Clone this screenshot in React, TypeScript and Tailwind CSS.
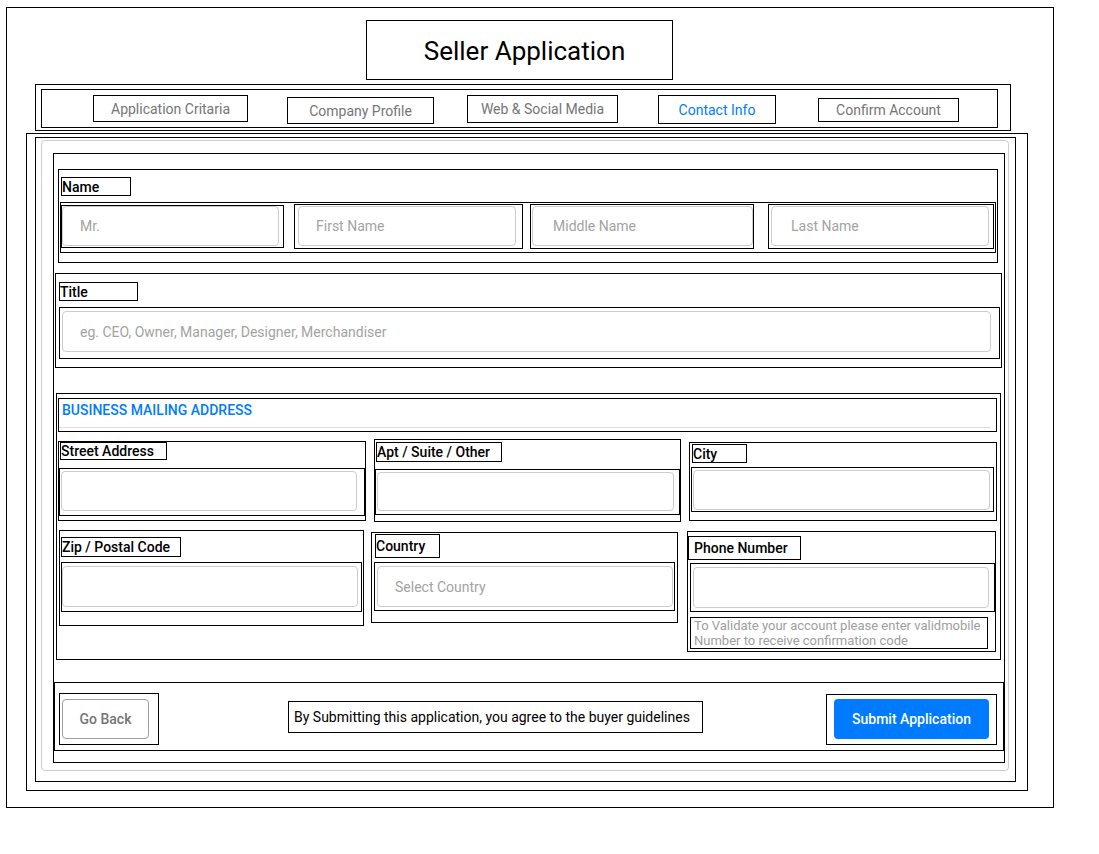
import React from "react";

const box = "border border-black";
const input =
  "block rounded-[4px] border border-[#cccccc] bg-white pl-[17px] text-sm text-black outline-none placeholder:text-[#a3a3a3]";
const label =
  "flex items-center text-sm font-medium leading-none text-black whitespace-nowrap";

const tabs = [
  { name: "Application Critaria", cls: "ml-[51px] mt-[5px] w-[155px] h-[27px]" },
  { name: "Company Profile", cls: "ml-[39px] mt-[7px] w-[147px] h-[27px]" },
  { name: "Web & Social Media", cls: "ml-[33px] mt-[5px] w-[151px] h-[28px]" },
  { name: "Contact Info", cls: "ml-[40px] mt-[5px] w-[118px] h-[29px]", active: true },
  { name: "Confirm Account", cls: "ml-[42px] mt-[8px] w-[141px] h-[24px]" },
];

const App = () => {
  return (
    <div className="pl-[6px] pt-[7px] pb-[46px] font-['Roboto',sans-serif] bg-white">
      <div className={`${box} w-[1048px] h-[801px]`}>
        {/* heading */}
        <div
          className={`${box} ml-[359px] mt-[12px] w-[307px] h-[60px] flex items-center justify-center pl-[10px] pt-[2px] text-[26px] text-black`}
        >
          Seller Application
        </div>

        {/* steps */}
        <div className={`${box} ml-[28px] mt-[4px] w-[976px] h-[47px]`}>
          <div className={`${box} ml-[5px] mt-[4px] w-[957px] h-[39px] flex items-start`}>
            {tabs.map((t) => (
              <div
                key={t.name}
                className={`${box} ${t.cls} flex items-center justify-center text-sm ${
                  t.active ? "text-[#007bff]" : "text-[#757575]"
                }`}
              >
                {t.name}
              </div>
            ))}
          </div>
        </div>

        {/* form */}
        <div className={`${box} ml-[19px] mt-[2px] w-[1002px] h-[658px]`}>
          <div className={`${box} ml-[8px] mt-[3px] w-[981px] h-[645px]`}>
            <div className="ml-[5px] mt-[2px] w-[968px] h-[631px] rounded-[4px] border border-[#cccccc]">
              <div className={`${box} ml-[11px] mt-[12px] w-[952px] h-[610px]`}>
                {/* Name */}
                <div className={`${box} ml-[4px] mt-[15px] w-[940px] h-[94px]`}>
                  <div className={`${box} ${label} ml-[2px] mt-[7px] w-[70px] h-[19px]`}>Name</div>
                  <div className={`${box} ml-[1px] mt-[6px] w-[936px] h-[51px] flex items-start`}>
                    <div className={`${box} mt-[2px] w-[223px] h-[43px]`}>
                      <input className={`${input} w-[217px] h-[40px]`} placeholder="Mr." />
                    </div>
                    <div className={`${box} ml-[10px] mt-[1px] w-[229px] h-[45px]`}>
                      <input className={`${input} ml-[3px] mt-[1px] w-[218px] h-[40px]`} placeholder="First Name" />
                    </div>
                    <div className={`${box} ml-[7px] mt-[1px] w-[224px] h-[45px]`}>
                      <input className={`${input} ml-[1px] mt-[1px] w-[221px] h-[40px] pl-[20px]`} placeholder="Middle Name" />
                    </div>
                    <div className={`${box} ml-[14px] mt-[1px] w-[226px] h-[45px]`}>
                      <input className={`${input} ml-[2px] mt-[1px] w-[218px] h-[40px] pl-[19px]`} placeholder="Last Name" />
                    </div>
                  </div>
                </div>

                {/* Title */}
                <div className={`${box} ml-[1px] mt-[10px] w-[947px] h-[95px]`}>
                  <div className={`${box} ${label} ml-[3px] mt-[8px] w-[79px] h-[19px]`}>Title</div>
                  <div className={`${box} ml-[3px] mt-[6px] w-[941px] h-[52px]`}>
                    <input
                      className={`${input} ml-[2px] mt-[3px] w-[929px] h-[41px] pl-[16px]`}
                      placeholder="eg. CEO, Owner, Manager, Designer, Merchandiser"
                    />
                  </div>
                </div>

                {/* Business mailing address */}
                <div className={`${box} ml-[2px] mt-[25px] w-[945px] h-[267px]`}>
                  <div className={`${box} ml-[1px] mt-[4px] w-[939px] h-[34px]`}>
                    <div className="w-[931px] h-[29px] border-b border-[#dddddd] pl-[3px] pt-[1px] text-sm font-medium text-[#007bff]">
                      BUSINESS MAILING ADDRESS
                    </div>
                  </div>

                  <div className="flex items-start">
                    <div className={`${box} ml-[1px] mt-[9px] w-[308px] h-[80px]`}>
                      <div className={`${box} ${label} ml-[1px] w-[107px] h-[18px]`}>Street Address</div>
                      <div className={`${box} mt-[8px] w-[306px] h-[48px]`}>
                        <input className={`${input} ml-[1px] mt-[2px] w-[296px] h-[40px]`} />
                      </div>
                    </div>
                    <div className={`${box} ml-[8px] mt-[7px] w-[307px] h-[83px]`}>
                      <div className={`${box} ${label} ml-[1px] mt-[2px] w-[126px] h-[20px]`}>Apt / Suite / Other</div>
                      <div className={`${box} mt-[7px] w-[305px] h-[46px]`}>
                        <input className={`${input} ml-[1px] mt-[2px] w-[297px] h-[39px]`} />
                      </div>
                    </div>
                    <div className={`${box} ml-[8px] mt-[10px] w-[308px] h-[79px]`}>
                      <div className={`${box} ${label} ml-[2px] mt-[1px] w-[55px] h-[19px]`}>City</div>
                      <div className={`${box} ml-[1px] mt-[4px] w-[303px] h-[45px]`}>
                        <input className={`${input} ml-[1px] mt-[2px] w-[297px] h-[40px]`} />
                      </div>
                    </div>
                  </div>

                  <div className="flex items-start">
                    <div className={`${box} ml-[2px] mt-[8px] w-[305px] h-[96px]`}>
                      <div className={`${box} ${label} ml-[1px] mt-[6px] w-[120px] h-[20px]`}>Zip / Postal Code</div>
                      <div className={`${box} ml-[1px] mt-[5px] w-[301px] h-[50px]`}>
                        <input className={`${input} mt-[3px] w-[296px] h-[41px]`} />
                      </div>
                    </div>
                    <div className={`${box} ml-[7px] mt-[10px] w-[307px] h-[91px]`}>
                      <div className={`${box} ${label} ml-[3px] mt-[1px] w-[65px] h-[24px]`}>Country</div>
                      <div className={`${box} ml-[2px] mt-[4px] w-[301px] h-[49px]`}>
                        <input className={`${input} ml-[2px] mt-[3px] w-[296px] h-[41px]`} placeholder="Select Country" />
                      </div>
                    </div>
                    <div className={`${box} ml-[9px] mt-[9px] w-[309px] h-[121px]`}>
                      <div className={`${box} ${label} mt-[4px] w-[113px] h-[24px] pl-[5px]`}>Phone Number</div>
                      <div className={`${box} ml-[2px] mt-[3px] w-[305px] h-[49px]`}>
                        <input className={`${input} ml-[2px] mt-[3px] w-[296px] h-[41px]`} />
                      </div>
                      <div className={`${box} ml-[2px] mt-[5px] w-[298px] h-[32px] pl-[3px] text-[13px] leading-[15px] text-[#9e9e9e]`}>
                        To Validate your account please enter validmobile Number to receive confirmation code
                      </div>
                    </div>
                  </div>
                </div>

                {/* actions */}
                <div className={`${box} mt-[22px] w-[950px] h-[69px] flex items-start`}>
                  <div className={`${box} ml-[4px] mt-[10px] w-[100px] h-[52px]`}>
                    <button className="ml-[2px] mt-[5px] w-[87px] h-[40px] rounded-[4px] border border-[#9e9e9e] text-sm font-medium text-[#757575]">
                      Go Back
                    </button>
                  </div>
                  <div className={`${box} ml-[129px] mt-[18px] w-[415px] h-[32px] flex items-center pl-[5px] text-sm text-black`}>
                    By Submitting this application, you agree to the buyer guidelines
                  </div>
                  <div className={`${box} ml-[123px] mt-[11px] w-[171px] h-[51px]`}>
                    <button className="ml-[7px] mt-[4px] w-[155px] h-[40px] rounded-[4px] bg-[#007bff] text-sm font-medium text-white">
                      Submit Application
                    </button>
                  </div>
                </div>
              </div>
            </div>
          </div>
        </div>
      </div>
    </div>
  );
};

export default App;
